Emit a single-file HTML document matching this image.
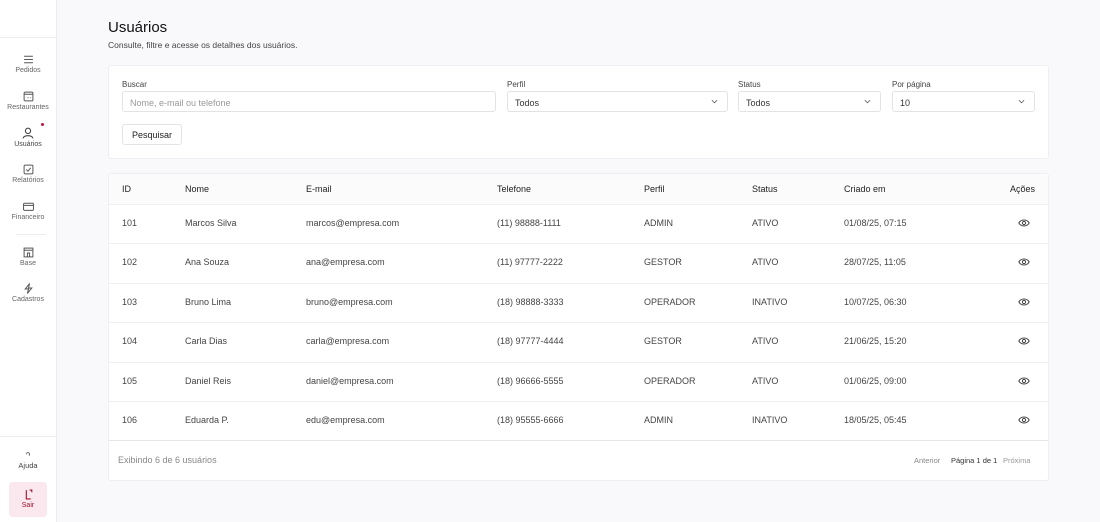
<!DOCTYPE html><html><head><meta charset="utf-8"><style>
*{box-sizing:border-box;margin:0;padding:0}
body{width:1100px;height:522px;background:#f9f8fb;font-family:"Liberation Sans",sans-serif;color:#222;position:relative;overflow:hidden}
.sb{position:absolute;left:0;top:0;width:57px;height:522px;background:#fff;border-right:1px solid #ececf0}
.hr{position:absolute;left:0;width:56px;border-top:1px solid #ececf0}
.it{position:absolute;left:0;width:56px;text-align:center;font-size:7px;color:#666}
.it svg{display:block;margin:0 auto 2px}
.a{position:absolute;white-space:nowrap}
.card{position:absolute;left:108px;width:941px;background:#fff;border:1px solid #efeef2;border-radius:3px}
.lbl{font-size:8px;color:#444}
.inp{position:absolute;height:21px;border:1px solid #e3e2e7;border-radius:3px;font-size:9px;padding:6px 7px;color:#333}
.chev{position:absolute;right:9px;top:6px}
.row{position:absolute;left:0;width:939px;height:40px;border-top:1px solid #efeef2;font-size:9px;color:#444}
.row span,.hd span{position:absolute;top:13px}
.row svg{position:absolute;right:18px;top:13px}
.hd{position:absolute;left:0;top:0;width:939px;height:30px;background:#fbfbfc;font-size:9px;color:#222}
.hd span{top:10px}
</style></head><body>
<div class="sb">
<div class="hr" style="top:37px"></div>
<div class="it" style="top:54px"><svg width="11" height="11" viewBox="0 0 10 10" stroke="#555" fill="none" stroke-width="0.9"><path d="M1 2h8M1 5h8M1 8h8"/></svg>Pedidos</div>
<div class="it" style="top:91px"><svg width="11" height="11" viewBox="0 0 10 10" stroke="#555" fill="none" stroke-width="0.9"><rect x="1" y="1" width="8" height="8" rx="1"/><path d="M1 3h8M3.5 6h0.5M5 6h.5M6.5 6h.5"/></svg>Restaurantes</div>
<div class="it" style="top:127px;color:#444"><svg width="12" height="12" viewBox="0 0 10 10" stroke="#444" fill="none" stroke-width="0.9"><circle cx="5" cy="3.2" r="2.2"/><path d="M1 9.5c0-3 8-3 8 0"/></svg>Usuários</div>
<div style="position:absolute;left:41px;top:123px;width:3px;height:3px;border-radius:50%;background:#c0143c"></div>
<div class="it" style="top:164px"><svg width="11" height="11" viewBox="0 0 10 10" stroke="#555" fill="none" stroke-width="0.9"><rect x="1" y="1" width="8" height="8" rx="1"/><path d="M3 5l1.5 1.5L7 3.5"/></svg>Relatórios</div>
<div class="it" style="top:201px"><svg width="11" height="11" viewBox="0 0 10 10" stroke="#555" fill="none" stroke-width="0.9"><rect x="0.5" y="2" width="9" height="6.5" rx="1"/><path d="M0.5 4h9"/></svg>Financeiro</div>
<div class="hr" style="top:234px;left:16px;width:30px"></div>
<div class="it" style="top:247px"><svg width="11" height="11" viewBox="0 0 10 10" stroke="#555" fill="none" stroke-width="0.9"><rect x="1" y="1" width="8" height="8"/><path d="M1 3h8M4 9V5.5h2V9"/></svg>Base</div>
<div class="it" style="top:283px"><svg width="11" height="11" viewBox="0 0 10 10" stroke="#555" fill="none" stroke-width="0.9"><path d="M6 0.5L2 5.5h3L4 9.5l4-5H5z"/></svg>Cadastros</div>
<div class="hr" style="top:436px"></div>
<div class="it" style="top:451px;font-size:7.5px;color:#444"><svg width="8" height="8" viewBox="0 0 10 10" stroke="#555" fill="none" stroke-width="1"><path d="M3 4a2 2 0 1 1 3 1.7"/></svg>Ajuda</div>
<div style="position:absolute;left:9px;top:482px;width:38px;height:35px;background:#fbe8ee;border-radius:4px"></div>
<div class="it" style="top:489px;color:#a0102c"><svg width="11" height="11" viewBox="0 0 10 10" stroke="#a0102c" fill="none" stroke-width="1"><path d="M3 1v8h4M6 1h2v2"/></svg>Sair</div>
</div>
<div class="a" style="left:108px;top:19px;font-size:15px;color:#111">Usuários</div>
<div class="a" style="left:108px;top:40px;font-size:8.5px;color:#444">Consulte, filtre e acesse os detalhes dos usuários.</div>
<div class="card" style="top:65px;height:94px">
<div class="a lbl" style="left:13px;top:14px">Buscar</div>
<div class="inp" style="left:13px;top:25px;width:374px;color:#999">Nome, e-mail ou telefone</div>
<div class="a lbl" style="left:398px;top:14px">Perfil</div>
<div class="inp" style="left:398px;top:25px;width:221px">Todos<svg class="chev" width="7" height="7" viewBox="0 0 8 8" fill="none" stroke="#666"><path d="M1 2.5l3 3 3-3"/></svg></div>
<div class="a lbl" style="left:629px;top:14px">Status</div>
<div class="inp" style="left:629px;top:25px;width:143px">Todos<svg class="chev" width="7" height="7" viewBox="0 0 8 8" fill="none" stroke="#666"><path d="M1 2.5l3 3 3-3"/></svg></div>
<div class="a lbl" style="left:783px;top:14px">Por página</div>
<div class="inp" style="left:783px;top:25px;width:143px">10<svg class="chev" width="7" height="7" viewBox="0 0 8 8" fill="none" stroke="#666"><path d="M1 2.5l3 3 3-3"/></svg></div>
<div class="inp" style="left:13px;top:58px;width:60px;height:21px;color:#222;padding:5px 9px">Pesquisar</div>
</div>
<div class="card" style="top:173px;height:308px">
<div class="hd"><span style="left:13px">ID</span><span style="left:76px">Nome</span><span style="left:197px">E-mail</span><span style="left:388px">Telefone</span><span style="left:535px">Perfil</span><span style="left:643px">Status</span><span style="left:735px">Criado em</span><span style="right:13px">Ações</span></div>
<div class="row" style="top:30px"><span style="left:13px">101</span><span style="left:76px">Marcos Silva</span><span style="left:197px">marcos@empresa.com</span><span style="left:388px">(11) 98888-1111</span><span style="left:535px">ADMIN</span><span style="left:643px">ATIVO</span><span style="left:735px">01/08/25, 07:15</span><svg width="12" height="10" viewBox="0 0 12 9" fill="none" stroke="#444"><path d="M0.8 4.5C3 0.5 9 0.5 11.2 4.5 9 8.5 3 8.5 0.8 4.5z"/><circle cx="6" cy="4.5" r="1.6"/></svg></div>
<div class="row" style="top:69px"><span style="left:13px">102</span><span style="left:76px">Ana Souza</span><span style="left:197px">ana@empresa.com</span><span style="left:388px">(11) 97777-2222</span><span style="left:535px">GESTOR</span><span style="left:643px">ATIVO</span><span style="left:735px">28/07/25, 11:05</span><svg width="12" height="10" viewBox="0 0 12 9" fill="none" stroke="#444"><path d="M0.8 4.5C3 0.5 9 0.5 11.2 4.5 9 8.5 3 8.5 0.8 4.5z"/><circle cx="6" cy="4.5" r="1.6"/></svg></div>
<div class="row" style="top:109px"><span style="left:13px">103</span><span style="left:76px">Bruno Lima</span><span style="left:197px">bruno@empresa.com</span><span style="left:388px">(18) 98888-3333</span><span style="left:535px">OPERADOR</span><span style="left:643px">INATIVO</span><span style="left:735px">10/07/25, 06:30</span><svg width="12" height="10" viewBox="0 0 12 9" fill="none" stroke="#444"><path d="M0.8 4.5C3 0.5 9 0.5 11.2 4.5 9 8.5 3 8.5 0.8 4.5z"/><circle cx="6" cy="4.5" r="1.6"/></svg></div>
<div class="row" style="top:148px"><span style="left:13px">104</span><span style="left:76px">Carla Dias</span><span style="left:197px">carla@empresa.com</span><span style="left:388px">(18) 97777-4444</span><span style="left:535px">GESTOR</span><span style="left:643px">ATIVO</span><span style="left:735px">21/06/25, 15:20</span><svg width="12" height="10" viewBox="0 0 12 9" fill="none" stroke="#444"><path d="M0.8 4.5C3 0.5 9 0.5 11.2 4.5 9 8.5 3 8.5 0.8 4.5z"/><circle cx="6" cy="4.5" r="1.6"/></svg></div>
<div class="row" style="top:188px"><span style="left:13px">105</span><span style="left:76px">Daniel Reis</span><span style="left:197px">daniel@empresa.com</span><span style="left:388px">(18) 96666-5555</span><span style="left:535px">OPERADOR</span><span style="left:643px">ATIVO</span><span style="left:735px">01/06/25, 09:00</span><svg width="12" height="10" viewBox="0 0 12 9" fill="none" stroke="#444"><path d="M0.8 4.5C3 0.5 9 0.5 11.2 4.5 9 8.5 3 8.5 0.8 4.5z"/><circle cx="6" cy="4.5" r="1.6"/></svg></div>
<div class="row" style="top:227px"><span style="left:13px">106</span><span style="left:76px">Eduarda P.</span><span style="left:197px">edu@empresa.com</span><span style="left:388px">(18) 95555-6666</span><span style="left:535px">ADMIN</span><span style="left:643px">INATIVO</span><span style="left:735px">18/05/25, 05:45</span><svg width="12" height="10" viewBox="0 0 12 9" fill="none" stroke="#444"><path d="M0.8 4.5C3 0.5 9 0.5 11.2 4.5 9 8.5 3 8.5 0.8 4.5z"/><circle cx="6" cy="4.5" r="1.6"/></svg></div>
<div class="row" style="top:266px;border-top:1px solid #e6e5ea"><span style="left:9px;color:#888;top:14px">Exibindo 6 de 6 usuários</span><span style="left:805px;font-size:7.5px;color:#888;top:15px">Anterior</span><span style="left:842px;font-size:7.5px;color:#333;top:15px">Página 1 de 1</span><span style="left:894px;font-size:7.5px;color:#999;top:15px">Próxima</span></div>
</div>
</body></html>
